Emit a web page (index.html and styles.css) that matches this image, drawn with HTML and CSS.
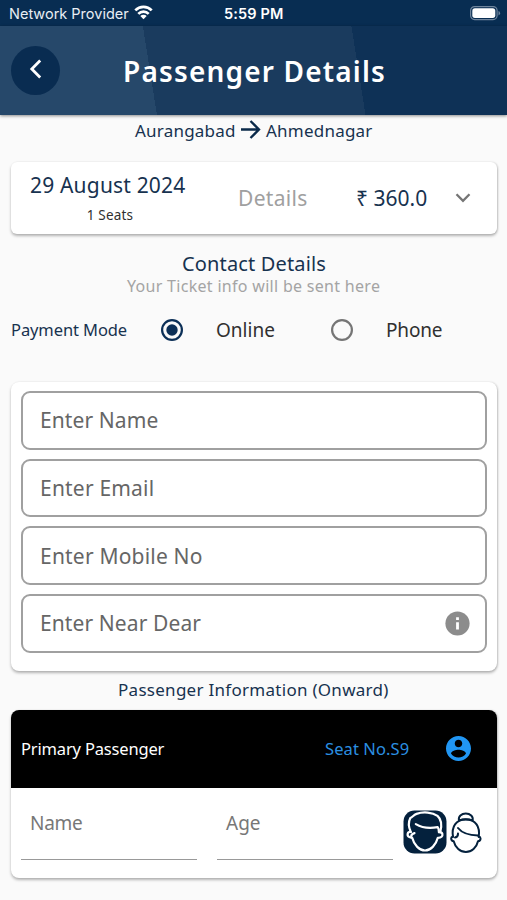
FILE: index.html
```html
<!DOCTYPE html>
<html lang="en">
<head>
<meta charset="utf-8">
<title>Passenger Details</title>
<link rel="stylesheet" href="styles.css">
</head>
<body>
<div class="status">
  <span class="carrier">Network Provider</span>
  <svg class="wifi" width="19" height="15" viewBox="0 0 19 15" fill="none" stroke="#fff" stroke-width="2.7"><path d="M1.300 5.400a11.500 11.500 0 0 1 16.400 0M4.300 8.900a7.300 7.300 0 0 1 10.400 0"/><path d="M9.500 14.200l-3.200-3.100a4.400 4.400 0 0 1 6.400 0z" fill="#fff" stroke="none"/></svg>
  <span class="clock">5:59 PM</span>
  <svg class="battery" width="31" height="15" viewBox="0 0 31 15"><rect x=".6" y=".6" width="26.500" height="13" rx="4" fill="none" stroke="#6f859d" stroke-width="1.200"/><rect x="2.300" y="2.300" width="23" height="9.600" rx="2.600" fill="#fff"/><path d="M28.500 5v4.400q1.600-.6 1.600-2.200T28.500 5z" fill="#6f859d"/></svg>
</div>
<header class="bar">
  <button class="back" aria-label="Back"><svg width="16" height="24" viewBox="0 0 16 24" fill="none" stroke="#fff" stroke-width="2.800"><path d="M12.200 2.500L3.800 11l8.400 8.500"/></svg></button>
  <h1>Passenger Details</h1>
</header>
<main>
  <div class="route">
    <span class="from">Aurangabad</span>
    <svg width="20" height="20" viewBox="0 0 20 20" fill="none" stroke="#0b2a4a" stroke-width="2.300"><path d="M0 9.500h18M9.500 1L18 9.500 9.500 18"/></svg>
    <span class="to">Ahmednagar</span>
  </div>
  <section class="card trip">
    <div class="when"><div class="date">29 August 2024</div><div class="seats">1 Seats</div></div>
    <span class="more">Details</span>
    <span class="fare">₹ 360.0</span>
    <svg class="chev" width="16" height="10" viewBox="0 0 16 10" fill="none" stroke="#757575" stroke-width="2.300"><path d="M1.500 1.200L8 7.800l6.500-6.600"/></svg>
  </section>
  <h2>Contact Details</h2>
  <p class="hint">Your Ticket info will be sent here</p>
  <div class="mode">
    <span class="mode-label">Payment Mode</span>
    <svg class="radio" width="24" height="24" viewBox="0 0 24 24"><circle cx="12" cy="12" r="9.900" fill="none" stroke="#0b2f57" stroke-width="2.200"/><circle cx="12" cy="12" r="5.700" fill="#0b2f57"/></svg>
    <span class="online">Online</span>
    <svg class="radio" width="24" height="24" viewBox="0 0 24 24"><circle cx="12" cy="12" r="9.900" fill="none" stroke="#757575" stroke-width="2.200"/></svg>
    <span class="phone">Phone</span>
  </div>
  <section class="card form">
    <div class="field">Enter Name</div>
    <div class="field wide">Enter Email</div>
    <div class="field wide">Enter Mobile No</div>
    <div class="field"><span>Enter Near Dear</span>
      <svg width="25" height="25" viewBox="0 0 25 25"><circle cx="12.500" cy="12.500" r="12.100" fill="#8c8c8c"/><path d="M11.100 6.300h2.800v2.600h-2.800zM11.100 11.200h2.800v7.300h-2.800z" fill="#fff"/></svg>
    </div>
  </section>
  <h3>Passenger Information (Onward)</h3>
  <section class="card passenger">
    <div class="head">
      <span class="primary">Primary Passenger</span>
      <span class="seat">Seat No.S9</span>
      <svg width="25" height="25" viewBox="2 2 20 20" fill="#2196f3"><path d="M12 2C6.480 2 2 6.480 2 12s4.480 10 10 10 10-4.480 10-10S17.520 2 12 2zm0 3c1.660 0 3 1.340 3 3s-1.340 3-3 3-3-1.340-3-3 1.340-3 3-3zm0 14.200c-2.500 0-4.710-1.280-6-3.220.03-1.990 4-3.080 6-3.080 1.990 0 5.970 1.090 6 3.080-1.290 1.940-3.500 3.220-6 3.220z"/></svg>
    </div>
    <div class="details">
      <div class="line name">Name</div>
      <div class="line">Age</div>
      <svg class="male" width="44" height="44" viewBox="0 0 44 44"><rect x=".5" y=".5" width="43" height="43" rx="11" fill="#04213d"/><g fill="none" stroke="#fff" stroke-width="2.200" stroke-linejoin="round" stroke-linecap="round"><path d="M7.800 22C5.500 17 5.500 11.500 7.300 8 9.500 7.200 10.500 5 13.500 3.900c7-2.600 16-1.600 21 2 4.500 4 4.500 10 2.700 16.500"/><path d="M7.800 22c-3.600-.6-4.200 3.800-1.500 5 1 .5 2 .7 2.900.8C11 35 16.500 40.500 22 40.500S33 35 34.800 27.800c3.500.1 5-1.500 4.600-3.800-.4-1.600-1.300-2.200-3.500-1.800-.1-3-.4-4.100-1.300-5.100-7 1.300-15.600.7-21.800-3"/><path d="M8.400 27.500c-.6-1.800.5-3.500 3.100-4.400"/></g></svg>
      <svg class="female" width="32" height="42" viewBox="0 0 32 42" fill="none" stroke="#04213d" stroke-width="2" stroke-linejoin="round" stroke-linecap="round"><path d="M9 8.500C8 4.500 11.500 1.500 15.800 1.500s7.800 3 6.800 7C18.500 6.900 13 6.900 9 8.500z"/><path d="M3 25C1.200 14.500 6 7.500 15.800 7.500S30.400 14.500 28.700 25"/><path d="M3 24.500c-2.600.4-2.400 4.200.7 4.700C5.200 35.500 10.200 40 15.900 40S26.600 35.500 28 29.200c3.300-.5 3.200-4.300.7-4.700"/><path d="M8 16c4 5 11 7.300 20 7.500M8 21.500c.2 2-.8 3.500-3 4"/></svg>
    </div>
  </section>
</main>
</body>
</html>
```
FILE: styles.css
```css
* { box-sizing: border-box; }
body { margin: 0; width: 507px; height: 900px; overflow: hidden; background: #fafafa; font-family: "Noto Sans", sans-serif; color: #17324f; white-space: nowrap; }
h1, h2, h3, p { margin: 0; font-weight: 400; }
svg { display: block; flex: none; }
.status { display: grid; grid-template-columns: 125px 90px 1fr 31px; align-items: center; height: 26px; padding: 1px 6px 0 9px; background: #082d52; color: #e9eef4; font-family: Inter, sans-serif; font-size: 14.5px; }
.wifi { margin: -2px 0 0 0; }
.clock { font-weight: 600; color: #fff; letter-spacing: .15px; }
.bar { display: flex; align-items: center; height: 89px; padding: 0 11px; background: linear-gradient(81deg, #26486a 0 155px, #1a3b5e 155px 361px, #0e3156 361px); box-shadow: 0 1px 3px rgba(0,0,0,.45); }
.back { display: flex; align-items: center; justify-content: center; width: 49px; height: 49px; padding: 0; border: 0; border-radius: 50%; background: #092c51; margin-top: -1px; }
h1 { margin-left: 63px; color: #fff; font-size: 28px; font-weight: 600; letter-spacing: 1.17px; line-height: 40px; }
.route { display: flex; align-items: center; height: 32px; padding: 0 0 2px 135px; font-size: 17px; letter-spacing: .22px; }
.from { width: 106px; }
.to { margin-left: 5px; }
.card { margin: 0 10px 0 11px; border-radius: 8px; background: #fff; box-shadow: 0 2px 3px rgba(0,0,0,.28), 1px 0 2px rgba(0,0,0,.12); }
.trip { display: flex; align-items: center; height: 72px; margin-top: 15px; border-radius: 6px; font-size: 21px; }
.when { width: 227px; padding-left: 19px; }
.date { line-height: 29px; letter-spacing: .18px; }
.seats { width: 160px; margin-top: 5px; color: #303030; font-size: 13.500px; line-height: 20px; letter-spacing: .2px; text-align: center; }
.more { width: 118px; color: #a0a0a0; letter-spacing: .3px; }
.fare { width: 99px; }
h2 { margin-top: 15px; padding: 1px 0 0 182px; font-size: 20px; line-height: 28px; letter-spacing: .15px; }
.hint { margin-top: -1px; padding-left: 127px; color: #a4a4a4; font-size: 16px; line-height: 18px; letter-spacing: .3px; }
.mode { display: flex; align-items: center; height: 36px; margin-top: 17px; padding-left: 11px; color: #303030; font-size: 19px; }
.mode-label { width: 149px; margin-top: -2px; color: #17324f; font-size: 16.500px; letter-spacing: -.1px; }
.online { width: 114px; margin-left: 32px; }
.phone { margin-left: 32px; letter-spacing: -.15px; }
.form { display: flex; flex-direction: column; gap: 9px; height: 289px; margin-top: 34px; padding: 9px 10px; }
.field { display: flex; align-items: center; justify-content: space-between; height: 58.700px; padding: 0 15px 0 17px; border: 2px solid #a0a0a0; border-radius: 9px; color: #666; font-size: 21px; letter-spacing: .1px; }
.wide { letter-spacing: .2px; }
h3 { height: 39px; padding-left: 118px; font-size: 17px; line-height: 38px; letter-spacing: .28px; }
.passenger { height: 168px; overflow: hidden; }
.head { display: flex; align-items: center; height: 78px; padding: 0 0 1px 10px; background: #000; color: #fff; font-size: 16.500px; }
.primary { width: 304px; letter-spacing: -.17px; }
.seat { width: 121px; color: #2b8fe0; letter-spacing: .1px; }
.details { display: flex; padding-left: 10px; color: #777; font-size: 19px; }
.line { width: 176px; height: 72px; margin-right: 20px; padding: 21px 0 0 9px; border-bottom: 1px solid #999; line-height: 28px; }
.name { letter-spacing: -.25px; }
.line + .line { margin-right: 10px; }
.male { margin-top: 22px; }
.female { margin: 24px 0 0 3px; }
```
